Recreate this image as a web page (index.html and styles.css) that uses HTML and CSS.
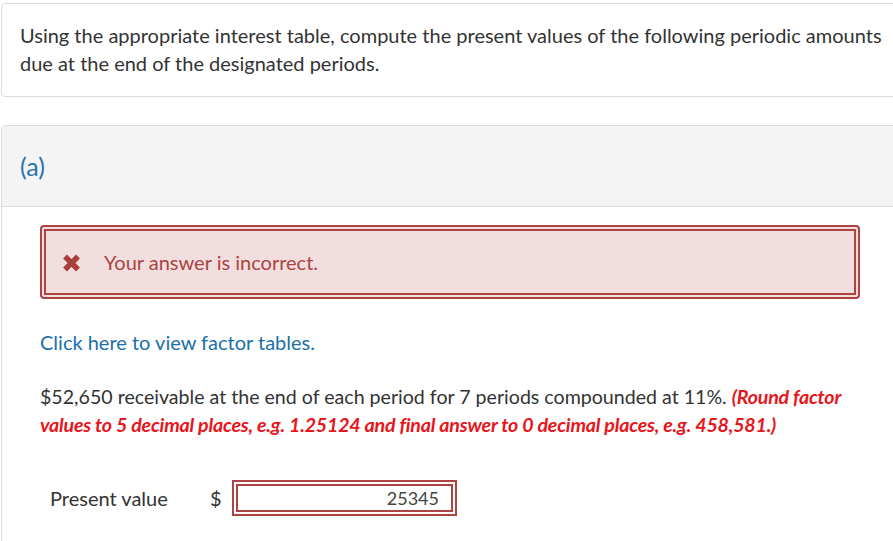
FILE: index.html
```html
<!DOCTYPE html>
<html lang="en">
<head>
    <meta charset="UTF-8">
    <meta name="viewport" content="width=device-width, initial-scale=1.0">
    <title>Present value question</title>
    <link rel="stylesheet" href="styles.css">
</head>
<body>
    <div class="card intro">
        <p>Using the appropriate interest table, compute the present values of the following periodic amounts due at the end of the designated periods.</p>
    </div>

    <div class="card part">
        <div class="part-header">(a)</div>
        <div class="part-body">
            <div class="alert">
                <svg class="alert-icon" width="19" height="18" viewBox="0 0 19 18">
                    <path d="M3 2.5 L16 15.5 M16 2.5 L3 15.5" stroke="#a7403c" stroke-width="5.4"/>
                </svg>
                <span>Your answer is incorrect.</span>
            </div>

            <a class="tables-link" href="#">Click here to view factor tables.</a>

            <p class="question">$52,650 receivable at the end of each period for 7 periods compounded at 11%. <em class="hint">(Round factor values to 5 decimal places, e.g. 1.25124 and final answer to 0 decimal places, e.g. 458,581.)</em></p>

            <div class="answer-row">
                <label for="pv">Present value</label>
                <span class="currency">$</span>
                <input type="text" id="pv" value="25345">
            </div>
        </div>
    </div>
</body>
</html>
```

FILE: styles.css
```css
/* Base */
* {
    margin: 0;
    padding: 0;
    box-sizing: border-box;
}

body {
    font-family: 'Lato', 'Open Sans', sans-serif;
    font-size: 20px;
    line-height: 28px;
    color: #333;
    background-color: #fff;
    padding: 3px 0 0 1px;
    overflow: hidden;
    height: 541px;
}

.card {
    border: 1px solid #dcdcdc;
    border-radius: 4px;
    width: 920px;
}

.intro {
    padding: 17px 18px 18px 18px;
    height: 94px;
}

.intro p {
    width: 876px;
}

.part {
    margin-top: 28px;
    height: 500px;
}

.part-header {
    background-color: #f4f4f4;
    border-bottom: 1px solid #dcdcdc;
    height: 81px;
    padding: 26px 18px 0;
    font-size: 25px;
    color: #1f76b0;
}

.part-body {
    padding: 18px 38px 0;
}

.alert {
    width: 820px;
    height: 74px;
    background-color: #f2dede;
    border: 6px double #ad4441;
    border-radius: 4px;
    display: flex;
    align-items: center;
    padding-left: 16px;
    color: #a94442;
}

.alert-icon {
    margin-right: 23px;
    margin-top: 1px;
}

.tables-link {
    display: block;
    margin-top: 29px;
    color: #1a6fa8;
    text-decoration: none;
}

.question {
    margin-top: 27px;
    width: 820px;
    font-size: 19.6px;
}

.hint {
    color: #e8151b;
    font-weight: bold;
    letter-spacing: -0.2px;
}

.answer-row {
    display: flex;
    align-items: center;
    margin-top: 41px;
    padding-left: 10px;
}

.answer-row label {
    width: 160px;
}

.currency {
    width: 22px;
}

.answer-row input {
    width: 225px;
    height: 36px;
    border: 6px double #ad4441;
    font-family: 'Lato', 'Open Sans', sans-serif;
    font-size: 18px;
    color: #444;
    text-align: right;
    padding: 0 12px;
    outline: none;
}
```
